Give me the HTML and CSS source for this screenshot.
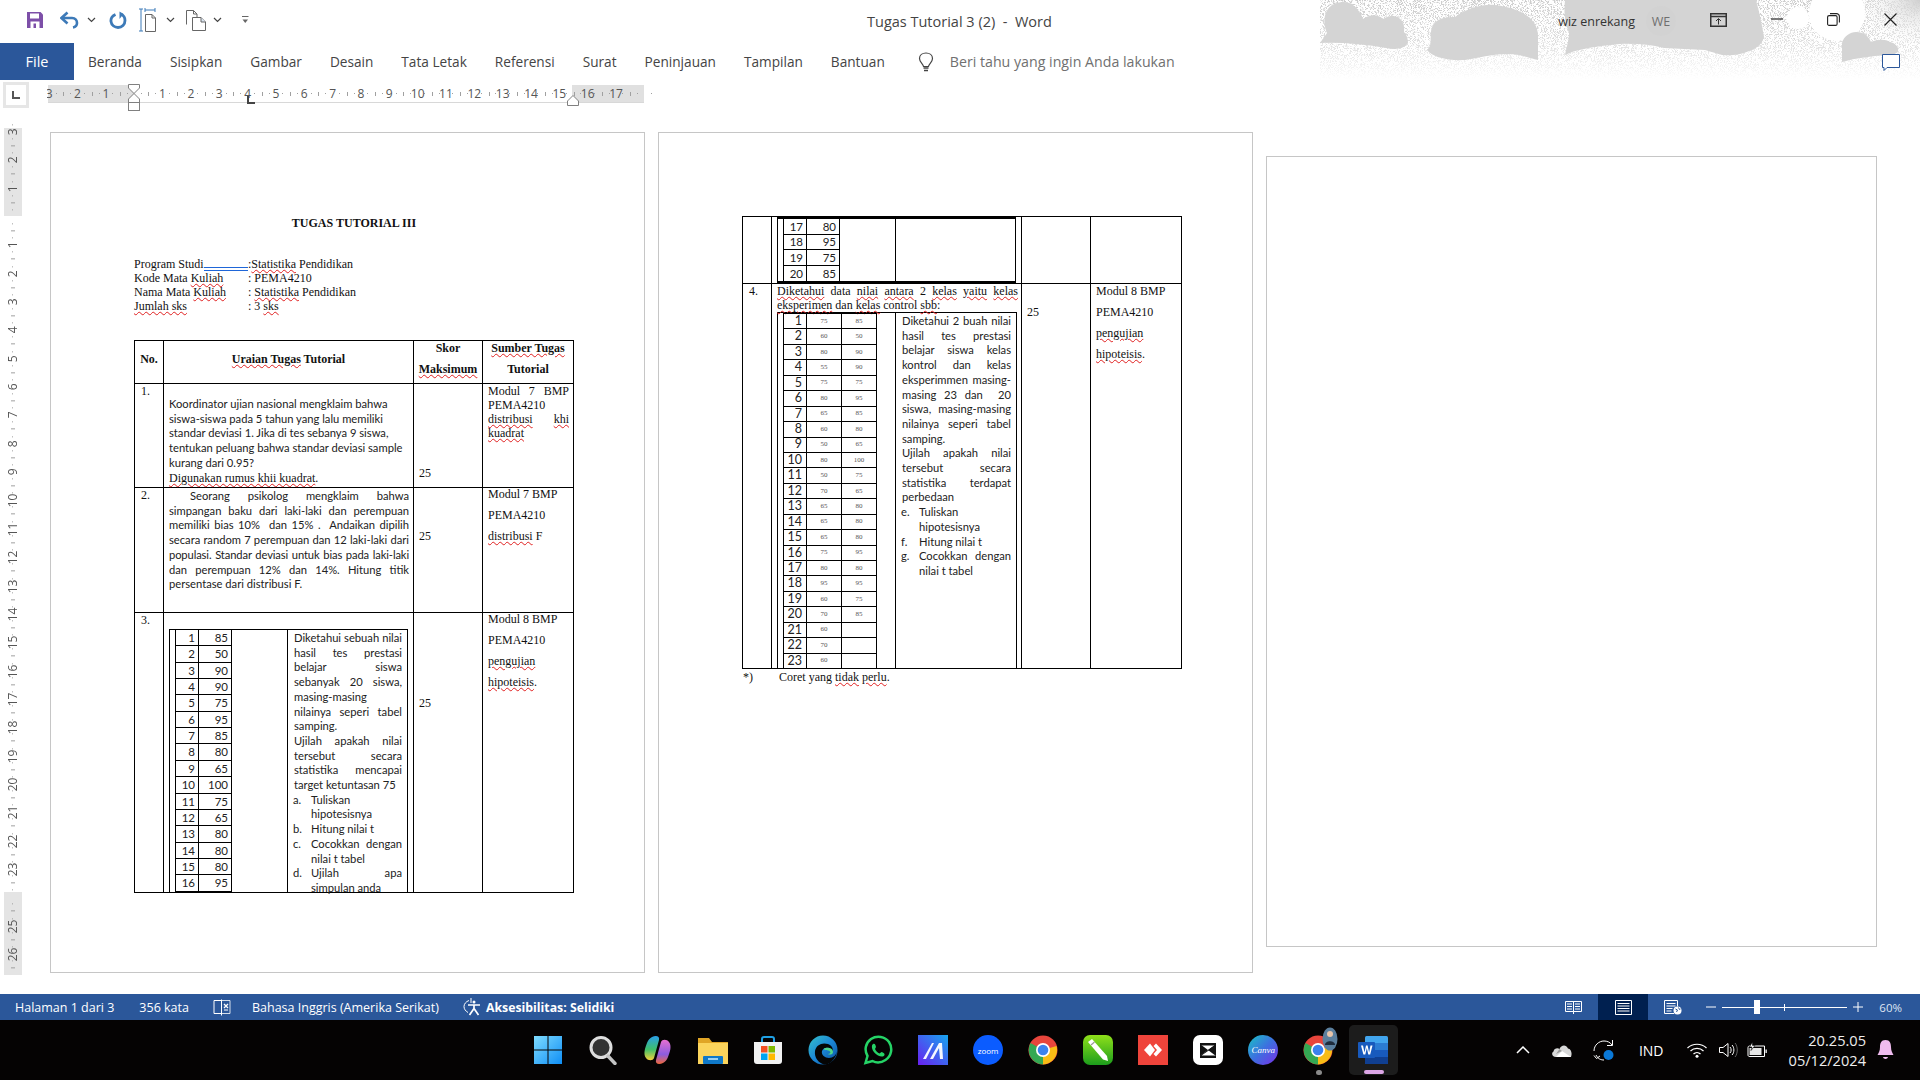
FILE: index.html
```html
<!DOCTYPE html>
<html lang="id">
<head>
    <meta charset="UTF-8">
    <title>Tugas Tutorial 3 (2) - Word</title>
    <link rel="stylesheet" href="styles.css">
</head>
<body>
<div class="app">
    <header class="head">
        <svg class="clouds" width="600" height="80" viewBox="0 0 600 80">
            <defs>
                <filter id="speck" x="0" y="0" width="100%" height="100%" color-interpolation-filters="sRGB">
                    <feTurbulence type="fractalNoise" baseFrequency="1.3" numOctaves="1" seed="4"/>
                    <feColorMatrix values="0 0 0 0 .8 0 0 0 0 .8 0 0 0 0 .8 10 0 0 0 -5"/>
                </filter>
                <linearGradient id="fadeV" x1="0" y1="0" x2="0" y2="1">
                    <stop offset="0" stop-color="#fff"/>
                    <stop offset=".5" stop-color="#aaa"/>
                    <stop offset="1" stop-color="#000"/>
                </linearGradient>
                <mask id="fade"><rect width="600" height="80" fill="url(#fadeV)"/></mask>
                <radialGradient id="corner" cx="1" cy="0" r="1">
                    <stop offset="0" stop-color="#cfcfcf"/>
                    <stop offset="1" stop-color="#fff" stop-opacity="0"/>
                </radialGradient>
            </defs>
            <rect width="600" height="80" filter="url(#speck)" mask="url(#fade)"/>
            <rect x="530" y="0" width="70" height="50" fill="url(#corner)"/>
            <circle cx="517" cy="13" r="28" fill="#fff"/>
            <circle cx="478" cy="18" r="11" fill="#fff"/>
            <g fill="#d4d4d4">
                <path d="M0 43 L7 33 C0 16 8 2 23 2 C33 2 39 9 43 19 C50 14 58 14 63 19 C74 12 86 18 84 32 C88 36 88 42 88 43 C84 49 76 50 66 48 C44 44 20 42 0 43Z"/>
                <path d="M107 50 C112 46 110 40 111 32 C112 20 122 17 135 17 C148 8 162 4 175 5 C200 8 218 18 218 36 L218 60 L199 55 C180 52 165 57 145 60 C128 61 112 57 107 50Z"/>
                <path d="M245 0 L436 0 C440 14 442 26 444 37 C442 44 437 48 432 50 C420 55 410 56 402 55 L385 50 L344 48 C325 43 305 43 291 45 C270 47 255 50 245 55 C247 45 249 40 249 33 C244 20 244 10 245 0Z"/>
                <path d="M522 62 L522 43 C524 36 530 32 536 32 C544 32 549 37 551 42 C558 39 566 39 570 42 C577 44 579 48 578 52 C574 55 570 55 566 55 C552 56 536 58 522 62Z"/>
            </g>
        </svg>
        <div class="titlebar">
            <div class="qat">
                <span class="q q-save">
                    <svg width="18" height="18" viewBox="0 0 18 18"><path d="M1 1h13.500L17 3.500V17H1z" fill="#7d4fa8"/><rect x="4" y="2.500" width="9" height="5" fill="#fff"/><rect x="4.500" y="10.500" width="9" height="6.500" fill="#fff"/><rect x="7.500" y="12.500" width="2.500" height="4.500" fill="#7d4fa8"/></svg>
                </span>
                <span class="q q-undo">
                    <svg width="20" height="18" viewBox="0 0 20 18"><path d="M3 7 H12 C15.500 7 17 9.500 17 12 C17 14.500 15.500 16 13 16.500" fill="none" stroke="#3d7ab8" stroke-width="2.600"/><path d="M7.500 1.500 L1.500 7 L7.500 12.500" fill="none" stroke="#3d7ab8" stroke-width="2.600"/></svg>
                </span>
                <span class="q q-c1"><svg width="9" height="6" viewBox="0 0 9 6"><path d="M1 1l3.500 3.500L8 1" fill="none" stroke="#444" stroke-width="1.200"/></svg></span>
                <span class="q q-redo">
                    <svg width="18" height="18" viewBox="0 0 18 18"><path d="M6.500 3.500 C3 5 1.700 8 2 10.500 C2.500 14.500 6 16.500 9 16.500 C13 16.500 16 13.500 16 9.500 C16 6.500 14 4 12 3" fill="none" stroke="#3d7ab8" stroke-width="2.800"/><path d="M10.500 0.500V8L14.500 3z" fill="#3d7ab8"/></svg>
                </span>
                <span class="q q-pw">
                    <svg width="20" height="24" viewBox="0 0 20 24"><path d="M2 1v22M0 1h4M0 23h4M6 2h10M6 0v4M16 0v4" fill="none" stroke="#3d7ab8"/><path d="M6.500 6.500H13L16.500 10V23.500H6.500z" fill="#fff" stroke="#666"/><path d="M13 6.500V10H16.500" fill="none" stroke="#666"/></svg>
                </span>
                <span class="q q-c2"><svg width="9" height="6" viewBox="0 0 9 6"><path d="M1 1l3.500 3.500L8 1" fill="none" stroke="#444" stroke-width="1.200"/></svg></span>
                <span class="q q-mp">
                    <svg width="22" height="22" viewBox="0 0 22 22"><path d="M1.500 15.500V1.500H8.500L12 5V8" fill="none" stroke="#666"/><path d="M8.500 1.500V5H12" fill="none" stroke="#666"/><path d="M7.500 8.500H16L20.500 13V21.500H7.500z" fill="#fff" stroke="#666"/><path d="M16 8.500V13H20.500" fill="#dbe6f2" stroke="#666"/></svg>
                </span>
                <span class="q q-c3"><svg width="9" height="6" viewBox="0 0 9 6"><path d="M1 1l3.500 3.500L8 1" fill="none" stroke="#444" stroke-width="1.200"/></svg></span>
                <span class="q q-more"><svg width="7" height="8" viewBox="0 0 7 8"><path d="M0 .5h6.500" stroke="#666"/><path d="M.5 3.500h5.500L3.250 7z" fill="#666"/></svg></span>
            </div>
            <div class="doc-title">Tugas Tutorial 3 (2)&nbsp; -&nbsp; Word</div>
            <div class="win">
                <span class="user">wiz enrekang</span>
                <span class="avatar">WE</span>
                <svg class="w-ribbon" width="17" height="14" viewBox="0 0 17 14"><rect x=".75" y=".75" width="15.500" height="12.500" fill="none" stroke="#333" stroke-width="1.500"/><path d="M1 3.500h15" stroke="#333" stroke-width="1.500"/><path d="M8.500 11.500V6M6 8l2.500-2.500L11 8" fill="none" stroke="#333"/></svg>
                <svg class="w-min" width="12" height="2" viewBox="0 0 12 2"><path d="M0 1h12" stroke="#222" stroke-width="1.200"/></svg>
                <svg class="w-max" width="13" height="13" viewBox="0 0 13 13"><rect x=".6" y="2.600" width="9.500" height="9.800" rx="1.500" fill="none" stroke="#222" stroke-width="1.100"/><path d="M3 .6h6.500c1.500 0 2.900 1.400 2.900 2.900v6" fill="none" stroke="#222" stroke-width="1.100"/></svg>
                <svg class="w-close" width="13" height="13" viewBox="0 0 13 13"><path d="M.5.500l12 12M12.500.500l-12 12" stroke="#222" stroke-width="1.200"/></svg>
            </div>
        </div>
        <nav class="tabs">
            <a class="file">File</a>
            <a class="tab">Beranda</a>
            <a class="tab">Sisipkan</a>
            <a class="tab">Gambar</a>
            <a class="tab">Desain</a>
            <a class="tab">Tata Letak</a>
            <a class="tab">Referensi</a>
            <a class="tab">Surat</a>
            <a class="tab">Peninjauan</a>
            <a class="tab">Tampilan</a>
            <a class="tab">Bantuan</a>
            <svg class="bulb" width="16" height="20" viewBox="0 0 16 20"><path d="M5.500 14.500 C5 11.500 1.500 10 1.500 6.500 C1.500 3 4.500 1 8 1 C11.500 1 14.500 3 14.500 6.500 C14.500 10 11 11.500 10.500 14.500z" fill="none" stroke="#444" stroke-width="1.200"/><path d="M5.500 16h5M6 18.500h4" stroke="#444" stroke-width="1.300"/></svg>
            <span class="tell">Beri tahu yang ingin Anda lakukan</span>
            <svg class="comment" width="18" height="17" viewBox="0 0 18 17"><path d="M.5.500h17v13H5l-3 3v-3H.5z" fill="#fff" stroke="#2b579a"/></svg>
        </nav>
    </header>

    <div class="ruler-row">
        <div class="tab-sel"><svg viewBox="0 0 8 8"><path d="M1 0v7h7" fill="none" stroke="#555" stroke-width="2"/></svg></div>
        <div class="hruler">
            <div class="hr-nums">
                <span>3</span><span>2</span><span>1</span><span></span><span>1</span><span>2</span><span>3</span><span>4</span><span>5</span><span>6</span><span>7</span><span>8</span><span>9</span><span>10</span><span>11</span><span>12</span><span>13</span><span>14</span><span>15</span><span>16</span><span>17</span><span></span>
            </div>
            <svg class="mark m-left" width="14" height="28" viewBox="0 0 14 28"><path d="M1.500 .5h11V4L7 9.500 1.500 4z M7 9.500L12.500 15v3.500h-11V15z" fill="#fff" stroke="#808080"/><rect x="1.500" y="18.500" width="11" height="8" fill="#fff" stroke="#808080"/></svg>
            <svg class="mark m-tab" width="8" height="8" viewBox="0 0 8 8"><path d="M1 0v7h7" fill="none" stroke="#444" stroke-width="2"/></svg>
            <svg class="mark m-right" width="12" height="11" viewBox="0 0 12 11"><path d="M6 .5L11.500 6v4.500H.5V6z" fill="#fff" stroke="#808080"/></svg>
        </div>
    </div>

    <main class="workspace">
        <div class="vruler">
            <span>3</span><span>2</span><span>1</span>
            <span class="on"></span>
            <span class="on">1</span><span class="on">2</span><span class="on">3</span><span class="on">4</span><span class="on">5</span><span class="on">6</span><span class="on">7</span><span class="on">8</span><span class="on">9</span><span class="on">10</span><span class="on">11</span><span class="on">12</span><span class="on">13</span><span class="on">14</span><span class="on">15</span><span class="on">16</span><span class="on">17</span><span class="on">18</span><span class="on">19</span><span class="on">20</span><span class="on">21</span><span class="on">22</span><span class="on">23</span>
            <span></span><span>25</span><span>26</span>
        </div>
        <div class="pages">
            <section class="page">
                <div class="doc-head">TUGAS TUTORIAL III</div>
                <div class="info">
                    <div class="info-row"><span class="k">Program Studi<i class="gram"></i></span><span class="v">:<u>Statistika</u> Pendidikan</span></div>
                    <div class="info-row"><span class="k">Kode Mata <u>Kuliah</u></span><span class="v">: PEMA4210</span></div>
                    <div class="info-row"><span class="k">Nama Mata <u>Kuliah</u></span><span class="v">: <u>Statistika</u> Pendidikan</span></div>
                    <div class="info-row"><span class="k"><u>Jumlah sks</u></span><span class="v">: 3 <u>sks</u></span></div>
                </div>

                <table class="tutor">
                    <colgroup><col class="c-no"><col class="c-ur"><col class="c-sk"><col class="c-su"></colgroup>
                    <tr class="r-head">
                        <th>No.</th>
                        <th><u>Uraian Tugas</u> Tutorial</th>
                        <th class="loose"><div>Skor</div><div><u>Maksimum</u></div></th>
                        <th class="loose"><div><u>Sumber Tugas</u></div><div>Tutorial</div></th>
                    </tr>
                    <tr class="r-1">
                        <td class="no">1.</td>
                        <td class="ur pad-13">
                            <div class="cal">Koordinator ujian nasional mengklaim bahwa</div>
                            <div class="cal">siswa-siswa pada 5 tahun yang lalu memiliki</div>
                            <div class="cal">standar deviasi 1. Jika di tes sebanya 9 siswa,</div>
                            <div class="cal">tentukan peluang bahwa standar deviasi sample</div>
                            <div class="cal">kurang dari 0.95?</div>
                            <div class="ser"><u>Digunakan rumus khii kuadrat</u>.</div>
                        </td>
                        <td class="sk bottom">25</td>
                        <td class="su">
                            <div class="j">Modul 7 BMP</div>
                            <div>PEMA4210</div>
                            <div class="j"><u>distribusi</u> <u>khi</u></div>
                            <div><u>kuadrat</u></div>
                        </td>
                    </tr>
                    <tr class="r-2">
                        <td class="no">2.</td>
                        <td class="ur pad-2">
                            <div class="cal j first">Seorang psikolog mengklaim bahwa</div>
                            <div class="cal j">simpangan baku dari laki-laki dan perempuan</div>
                            <div class="cal j">memiliki bias 10%&nbsp; dan 15% .&nbsp; Andaikan dipilih</div>
                            <div class="cal j">secara random 7 perempuan dan 12 laki-laki dari</div>
                            <div class="cal j tight">populasi. Standar deviasi untuk bias pada laki-laki</div>
                            <div class="cal j">dan perempuan 12% dan 14%. Hitung titik</div>
                            <div class="cal">persentase dari distribusi F.</div>
                        </td>
                        <td class="sk pt-41">25</td>
                        <td class="su loose up">
                            <div>Modul 7 BMP</div>
                            <div>PEMA4210</div>
                            <div><u>distribusi</u> F</div>
                        </td>
                    </tr>
                    <tr class="r-3">
                        <td class="no">3.</td>
                        <td class="ur nest">
                            <div class="split s-q3">
                                <div class="stub"></div>
                                <div class="left">
                                    <table class="nums n-q3">
                                        <tr><td>1</td><td>85</td></tr>
                                        <tr><td>2</td><td>50</td></tr>
                                        <tr><td>3</td><td>90</td></tr>
                                        <tr><td>4</td><td>90</td></tr>
                                        <tr><td>5</td><td>75</td></tr>
                                        <tr><td>6</td><td>95</td></tr>
                                        <tr><td>7</td><td>85</td></tr>
                                        <tr><td>8</td><td>80</td></tr>
                                        <tr><td>9</td><td>65</td></tr>
                                        <tr><td>10</td><td>100</td></tr>
                                        <tr><td>11</td><td>75</td></tr>
                                        <tr><td>12</td><td>65</td></tr>
                                        <tr><td>13</td><td>80</td></tr>
                                        <tr><td>14</td><td>80</td></tr>
                                        <tr><td>15</td><td>80</td></tr>
                                        <tr><td>16</td><td>95</td></tr>
                                    </table>
                                </div>
                                <div class="desc">
                                    <div class="cal j">Diketahui sebuah nilai</div>
                                    <div class="cal j">hasil tes prestasi</div>
                                    <div class="cal j">belajar siswa</div>
                                    <div class="cal j">sebanyak 20 siswa,</div>
                                    <div class="cal">masing-masing</div>
                                    <div class="cal j">nilainya seperi tabel</div>
                                    <div class="cal">samping.</div>
                                    <div class="cal j">Ujilah apakah nilai</div>
                                    <div class="cal j">tersebut secara</div>
                                    <div class="cal j">statistika mencapai</div>
                                    <div class="cal">target ketuntasan 75</div>
                                    <div class="cal li"><span class="m">a.</span><span>Tuliskan</span></div>
                                    <div class="cal in">hipotesisnya</div>
                                    <div class="cal li"><span class="m">b.</span><span>Hitung nilai t</span></div>
                                    <div class="cal li"><span class="m">c.</span><span class="j grow">Cocokkan dengan</span></div>
                                    <div class="cal in">nilai t tabel</div>
                                    <div class="cal li"><span class="m">d.</span><span class="j grow">Ujilah apa</span></div>
                                    <div class="cal in">simpulan anda</div>
                                </div>
                            </div>
                        </td>
                        <td class="sk pt-83">25</td>
                        <td class="su loose up">
                            <div>Modul 8 BMP</div>
                            <div>PEMA4210</div>
                            <div><u>pengujian</u></div>
                            <div><u>hipoteisis</u>.</div>
                        </td>
                    </tr>
                </table>
            </section>

            <section class="page">
                <table class="tutor">
                    <colgroup><col class="c-no"><col class="c-ur"><col class="c-sk"><col class="c-su"></colgroup>
                    <tr class="r-cont">
                        <td></td>
                        <td class="ur nest-top">
                            <div class="split s-cont">
                                <div class="stub"></div>
                                <div class="left">
                                    <table class="nums n-cont">
                                        <tr><td>17</td><td>80</td></tr>
                                        <tr><td>18</td><td>95</td></tr>
                                        <tr><td>19</td><td>75</td></tr>
                                        <tr><td>20</td><td>85</td></tr>
                                    </table>
                                </div>
                                <div class="desc"></div>
                            </div>
                        </td>
                        <td></td>
                        <td></td>
                    </tr>
                    <tr class="r-4">
                        <td class="no">4.</td>
                        <td class="ur nest-4">
                            <div class="ser j wide"><u>Diketahui</u> data <u>nilai</u> <u>antara</u> 2 <u>kelas</u> <u>yaitu</u> <u>kelas</u></div>
                            <div class="ser"><u>eksperimen</u> dan <u>kelas</u> control <u>sbb</u>:</div>
                            <div class="split s-q4">
                                <div class="stub"></div>
                                <div class="left">
                                    <table class="nums n-q4">
                                        <tr><td>1</td><td>75</td><td>85</td></tr>
                                        <tr><td>2</td><td>60</td><td>50</td></tr>
                                        <tr><td>3</td><td>80</td><td>90</td></tr>
                                        <tr><td>4</td><td>55</td><td>90</td></tr>
                                        <tr><td>5</td><td>75</td><td>75</td></tr>
                                        <tr><td>6</td><td>80</td><td>95</td></tr>
                                        <tr><td>7</td><td>65</td><td>85</td></tr>
                                        <tr><td>8</td><td>60</td><td>80</td></tr>
                                        <tr><td>9</td><td>50</td><td>65</td></tr>
                                        <tr><td>10</td><td>80</td><td>100</td></tr>
                                        <tr><td>11</td><td>50</td><td>75</td></tr>
                                        <tr><td>12</td><td>70</td><td>65</td></tr>
                                        <tr><td>13</td><td>65</td><td>80</td></tr>
                                        <tr><td>14</td><td>65</td><td>80</td></tr>
                                        <tr><td>15</td><td>65</td><td>80</td></tr>
                                        <tr><td>16</td><td>75</td><td>95</td></tr>
                                        <tr><td>17</td><td>80</td><td>80</td></tr>
                                        <tr><td>18</td><td>95</td><td>95</td></tr>
                                        <tr><td>19</td><td>60</td><td>75</td></tr>
                                        <tr><td>20</td><td>70</td><td>85</td></tr>
                                        <tr><td>21</td><td>60</td><td></td></tr>
                                        <tr><td>22</td><td>70</td><td></td></tr>
                                        <tr><td>23</td><td>60</td><td></td></tr>
                                    </table>
                                </div>
                                <div class="desc">
                                    <div class="cal j">Diketahui 2 buah nilai</div>
                                    <div class="cal j">hasil tes prestasi</div>
                                    <div class="cal j">belajar siswa kelas</div>
                                    <div class="cal j">kontrol dan kelas</div>
                                    <div class="cal j">eksperimmen masing-</div>
                                    <div class="cal j">masing 23 dan&nbsp; 20</div>
                                    <div class="cal j">siswa, masing-masing</div>
                                    <div class="cal j">nilainya seperi tabel</div>
                                    <div class="cal">samping.</div>
                                    <div class="cal j">Ujilah apakah nilai</div>
                                    <div class="cal j">tersebut secara</div>
                                    <div class="cal j">statistika terdapat</div>
                                    <div class="cal">perbedaan</div>
                                    <div class="cal li"><span class="m">e.</span><span>Tuliskan</span></div>
                                    <div class="cal in">hipotesisnya</div>
                                    <div class="cal li"><span class="m">f.</span><span>Hitung nilai t</span></div>
                                    <div class="cal li"><span class="m">g.</span><span class="j grow">Cocokkan dengan</span></div>
                                    <div class="cal in">nilai t tabel</div>
                                </div>
                            </div>
                        </td>
                        <td class="sk pt-21">25</td>
                        <td class="su loose">
                            <div>Modul 8 BMP</div>
                            <div>PEMA4210</div>
                            <div><u>pengujian</u></div>
                            <div><u>hipoteisis</u>.</div>
                        </td>
                    </tr>
                </table>
                <div class="foot"><span class="star">*)</span><span>Coret yang <u>tidak</u> <u>perlu</u>.</span></div>
            </section>

            <section class="page letter"></section>
        </div>
    </main>

    <footer class="status">
        <span class="st st-page">Halaman 1 dari 3</span>
        <span class="st st-words">356 kata</span>
        <svg class="st-book" width="18" height="17" viewBox="0 0 18 17"><path d="M8.500 1.500H1v13h7.500M8.500 .5v16" fill="none" stroke="#fff"/><path d="M8.500 1.500H17v13H8.500" fill="none" stroke="#fff" stroke-width=".8"/><path d="M11 5l4 4M15 5l-4 4" stroke="#fff" stroke-width="1.300"/><path d="M11 11h4" stroke="#fff"/></svg>
        <span class="st st-lang">Bahasa Inggris (Amerika Serikat)</span>
        <svg class="st-acc" width="20" height="18" viewBox="0 0 20 18"><path d="M6 2.500 C3 3.500 1 6 1 8.500 C1 11 2.500 13 5 14.500" fill="none" stroke="#fff"/><path d="M8 0v5" stroke="#fff"/><circle cx="11" cy="4" r="1.500" fill="#fff"/><path d="M5 7h12M11 7v3.500M6.500 17l4.500-6.500L15.500 17" fill="none" stroke="#fff" stroke-width="1.700"/></svg>
        <b class="st st-acc-t">Aksesibilitas: Selidiki</b>
        <div class="views">
            <span class="view">
                <svg width="17" height="14" viewBox="0 0 17 14"><path d="M8.500 1.500H.5v10h8zM8.500 1.500h8v10h-8zM2 4h5M2 6.500h5M2 9h5M10 4h5M10 6.500h5M10 9h5" fill="none" stroke="#fff"/><path d="M8.500 12v2" stroke="#fff"/></svg>
            </span>
            <span class="view active">
                <svg width="17" height="15" viewBox="0 0 17 15"><path d="M.5.500h16v14H.5zM2.500 3.500h12M2.500 6h12M2.500 8.500h12M2.500 11h12" fill="none" stroke="#fff"/></svg>
            </span>
            <span class="view">
                <svg width="18" height="15" viewBox="0 0 18 15"><path d="M10 13.500H.5V.5h13v6M2.500 3.500h9M2.500 6h9M2.500 8.500h6M2.500 11h5" fill="none" stroke="#fff"/><circle cx="13.500" cy="10.500" r="4" fill="#fff"/><path d="M11.500 9l2 1-1 2M14.500 7.500l1 2 1-.5" fill="none" stroke="#2b579a"/></svg>
            </span>
        </div>
        <div class="zoom">
            <svg width="10" height="2" viewBox="0 0 10 2"><path d="M0 1h10" stroke="#fff"/></svg>
            <div class="slider"><i class="thumb"></i><i class="mid"></i></div>
            <svg width="10" height="10" viewBox="0 0 10 10"><path d="M0 5h10M5 0v10" stroke="#fff"/></svg>
        </div>
        <span class="st st-zoom">60%</span>
    </footer>

    <div class="taskbar">
        <div class="apps">
            <span class="app-i">
                <svg width="30" height="30" viewBox="0 0 30 30"><defs><linearGradient id="winA" x1="0" y1="0" x2="1" y2="1"><stop offset="0" stop-color="#7fdcff"/><stop offset="1" stop-color="#0f8ef5"/></linearGradient></defs><path d="M1 1h13.500v13.500H1zM15.500 1H29v13.500H15.500zM1 15.500h13.500V29H1zM15.500 15.500H29V29H15.500z" fill="url(#winA)"/></svg>
            </span>
            <span class="app-i">
                <svg width="30" height="30" viewBox="0 0 30 30"><circle cx="13" cy="12.500" r="10" fill="#333" stroke="#dedede" stroke-width="3"/><path d="M20 21l7 7.500" stroke="#c4c4c4" stroke-width="3.400" stroke-linecap="round"/></svg>
            </span>
            <span class="app-i">
                <svg width="30" height="30" viewBox="0 0 30 30"><defs><linearGradient id="copA" x1="0" y1="0" x2="0" y2="1"><stop offset="0" stop-color="#2a9fe8"/><stop offset=".55" stop-color="#3fbf6a"/><stop offset="1" stop-color="#f6d13a"/></linearGradient><linearGradient id="copB" x1="0" y1="0" x2="0" y2="1"><stop offset="0" stop-color="#e86fd0"/><stop offset=".6" stop-color="#8c5ce0"/><stop offset="1" stop-color="#f0683a"/></linearGradient></defs><path d="M9 2 C13 0 17 1 16 5 L11 23 C10 26 5 26 3 23 C0 19 2 13 4 8 C5 5 7 3 9 2Z" fill="url(#copA)"/><path d="M20 28 C16 30 12 29 13 25 L18 7 C19 4 24 4 26 7 C29 11 27 17 25 22 C24 25 22 27 20 28Z" fill="url(#copB)"/></svg>
            </span>
            <span class="app-i">
                <svg width="30" height="30" viewBox="0 0 30 30"><path d="M0 3h11l3 4H30v22H0z" fill="#e0a526"/><path d="M0 8h30v21H0z" fill="#fbd45c"/><rect x="5" y="21" width="20" height="8" rx="1" fill="#0f78c8"/><rect x="10" y="23" width="10" height="2" fill="#9bd0f2"/></svg>
            </span>
            <span class="app-i">
                <svg width="30" height="30" viewBox="0 0 30 30"><path d="M9 8V4a2 2 0 012-2h8a2 2 0 012 2v4" fill="none" stroke="#1fa0e4" stroke-width="2"/><path d="M1 7h28v19a3 3 0 01-3 3H4a3 3 0 01-3-3z" fill="#f2f2f2"/><rect x="8" y="11" width="6.500" height="6.500" fill="#f25022"/><rect x="15.500" y="11" width="6.500" height="6.500" fill="#7fba00"/><rect x="8" y="18.500" width="6.500" height="6.500" fill="#00a4ef"/><rect x="15.500" y="18.500" width="6.500" height="6.500" fill="#ffb900"/></svg>
            </span>
            <span class="app-i">
                <svg width="30" height="30" viewBox="0 0 30 30"><defs><linearGradient id="edgeA" x1="0" y1="0" x2="1" y2="1"><stop offset="0" stop-color="#35c1c9"/><stop offset=".5" stop-color="#1b86d6"/><stop offset="1" stop-color="#0a4f9c"/></linearGradient></defs><circle cx="15" cy="15" r="14.500" fill="url(#edgeA)"/><path d="M29 15 C29 20 25 23 21 23 C17 23 13 20 14 16 C15 13 18 12 21 13 C24 14 24 17 22 18 C26 18 26 11 20 9 C14 7 8 10 7 16 C6 23 11 28 16 29.500 C23 30 29 22 29 15Z" fill="#050505"/><path d="M16 13.500 C18 12 25 12 25 17 C25 20 21 20 20 19 C23 19 23 16 20 15.500 C18 15 16.500 16 16 13.500Z" fill="#4fd68a"/></svg>
            </span>
            <span class="app-i">
                <svg width="30" height="30" viewBox="0 0 30 30"><path d="M2.500 28 L4.500 21 C1 15 2.500 8 8 4 C14 0 22 1.500 26 7 C30 13 28.500 21 22.500 25 C18 28 13 28 9.500 26z" fill="none" stroke="#25d366" stroke-width="2.500"/><path d="M10 9 C12 8 12.500 10 13 12 L12 14 C13 16 14.500 17.500 16.500 18.500 L18.500 17 C20.500 17.500 22 18.500 21.500 20 C20.500 22 18 22 15 20.500 C12 19 9.500 16 9 13 C8.700 11 9 9.700 10 9Z" fill="#25d366"/></svg>
            </span>
            <span class="app-i">
                <svg width="30" height="30" viewBox="0 0 30 30"><defs><linearGradient id="mA" x1="1" y1="0" x2="0" y2="1"><stop offset="0" stop-color="#16a6ef"/><stop offset="1" stop-color="#6a1ff0"/></linearGradient></defs><rect width="30" height="30" fill="url(#mA)"/><path d="M5 24L14 8h2L8 24zM12 24L21 8h3l1 16h-3l-1-11-6 11z" fill="#fff" opacity=".95"/></svg>
            </span>
            <span class="app-i zoomapp">zoom</span>
            <span class="app-i">
                <svg width="30" height="30" viewBox="0 0 30 30"><circle cx="15" cy="15" r="14.500" fill="#e8453c"/><path d="M15 15L28.500 11A14.500 14.500 0 0115 29.500z" fill="#f9bc15"/><path d="M15 15L15 29.500A14.500 14.500 0 012.500 8z" fill="#34a853"/><circle cx="15" cy="15" r="7" fill="#fff"/><circle cx="15" cy="15" r="5.300" fill="#3b82ef"/></svg>
            </span>
            <span class="app-i">
                <svg width="30" height="30" viewBox="0 0 30 30"><defs><linearGradient id="penA" x1="0" y1="0" x2="0" y2="1"><stop offset="0" stop-color="#8fe01a"/><stop offset="1" stop-color="#1c9d1c"/></linearGradient></defs><rect width="30" height="30" rx="7" fill="url(#penA)"/><path d="M5 7l4-3 15 17 1 5-5-1.500z" fill="#fff"/><path d="M8 10l3.500-3" stroke="#9a9a9a" stroke-width="1.200"/></svg>
            </span>
            <span class="app-i">
                <svg width="30" height="30" viewBox="0 0 30 30"><rect width="30" height="30" fill="#ef443b"/><path d="M12 8.500L6 15l6 6.500L17 15z" fill="#fff"/><path d="M18 8.500L24 15l-6 6.500-2.500-2.500L19 15l-3.500-4z" fill="#fff"/></svg>
            </span>
            <span class="app-i">
                <svg width="30" height="30" viewBox="0 0 30 30"><rect width="30" height="30" rx="7" fill="#fff"/><path d="M7 8h16v2.500L8.500 20.500H23V23H7v-2.500L21.500 10.500H7z" fill="#111"/><path d="M7 9l8 6-8 6zM23 9l-8 6 8 6z" fill="#111"/></svg>
            </span>
            <span class="app-i canva">Canva</span>
            <span class="app-i rel">
                <svg width="30" height="30" viewBox="0 0 30 30"><circle cx="15" cy="15" r="14.500" fill="#e8453c"/><path d="M15 15L28.500 11A14.500 14.500 0 0115 29.500z" fill="#f9bc15"/><path d="M15 15L15 29.500A14.500 14.500 0 012.500 8z" fill="#34a853"/><circle cx="15" cy="15" r="7" fill="#fff"/><circle cx="15" cy="15" r="5.300" fill="#3b82ef"/></svg>
                <svg class="badge" width="16" height="24" viewBox="0 0 16 24"><ellipse cx="8" cy="12" rx="7.500" ry="11.500" fill="#5b7f9e"/><circle cx="8" cy="7" r="3" fill="#e8c5ab"/><path d="M3 18c0-5 10-5 10 0z" fill="#1f2c3d"/></svg>
                <i class="dot"></i>
            </span>
            <span class="app-i word-i">
                <svg width="30" height="30" viewBox="0 0 30 30"><rect x="7" y="1" width="23" height="28" rx="1.500" fill="#41a5ee"/><rect x="7" y="8" width="23" height="7" fill="#2b7cd3"/><rect x="7" y="15" width="23" height="7" fill="#185abd"/><rect x="7" y="22" width="23" height="7" fill="#103f91"/><rect x="0" y="7" width="17" height="16" rx="1" fill="#185abd"/><path d="M3 10.500h2l1.500 7 1.500-7h1.600l1.500 7 1.400-7H14.500l-2.300 9h-1.900L8.800 13l-1.500 6.500H5.400z" fill="#fff"/></svg>
                <i class="run"></i>
            </span>
        </div>
        <div class="tray">
            <svg class="t-chev" width="14" height="8" viewBox="0 0 14 8"><path d="M1 7l6-6 6 6" fill="none" stroke="#fff" stroke-width="1.500"/></svg>
            <svg class="t-cloud" width="21" height="13" viewBox="0 0 21 13"><path d="M5 13 C1 13 0 9 2.500 7.500 C3 4 7 3.500 8.500 5 C10 1 15 0 17 4.500 C20 5 21.500 9 20 13z" fill="#d8d8d8"/><path d="M5 13 L11 7 L20 13z" fill="#fff"/><path d="M8.500 5 C9.500 6 11 7 11 7 L5 10z" fill="#9a9a9a"/></svg>
            <svg class="t-sync" width="22" height="21" viewBox="0 0 22 21"><path d="M1 11 C1 5 6 1 11 1 C14 1 17 2 19 5M14 5.500h5.500V0" fill="none" stroke="#fff"/><path d="M1 15.500l2.500 3L7 16M3 15 C5 19 8 20 11 20" fill="none" stroke="#fff"/><circle cx="15.500" cy="15" r="5" fill="#0a78d7"/></svg>
            <span class="t-lang">IND</span>
            <svg class="t-wifi" width="20" height="15" viewBox="0 0 20 15"><path d="M.5 5C5.500 0 14.500 0 19.500 5M3.500 8C7 4.500 13 4.500 16.500 8M6.500 11C8.500 9 11.500 9 13.500 11" fill="none" stroke="#fff" stroke-width="1.200"/><circle cx="10" cy="13.300" r="1.500" fill="#fff"/></svg>
            <svg class="t-vol" width="20" height="16" viewBox="0 0 20 16"><path d="M.5 5.500H4L9 1.500v13l-5-4H.5z" fill="none" stroke="#fff"/><path d="M11 5c1.500 1.500 1.500 4.500 0 6M13 3c2.500 2.500 2.500 7.500 0 10" fill="none" stroke="#fff"/><path d="M16 1c3 3.500 3 10.500 0 14" fill="none" stroke="#666"/></svg>
            <svg class="t-batt" width="20" height="17" viewBox="0 0 20 17"><path d="M3 4H17.500V14.500H3C1.500 14.500 1 14 1 13V5.500C1 4.500 1.500 4 3 4Z" fill="none" stroke="#fff"/><rect x="2.500" y="6" width="12" height="7" fill="#fff" opacity=".9"/><path d="M18.500 7.500h1.300v3.500h-1.300z" fill="#fff"/><path d="M5.500 0L2.500 5h2.500L4 8.500 8 3.500H5.500z" fill="#fff" stroke="#000" stroke-width=".6"/></svg>
            <div class="t-clock"><div>20.25.05</div><div>05/12/2024</div></div>
            <svg class="t-bell" width="17" height="20" viewBox="0 0 17 20"><path d="M8.500 0 C4 0 3 3.500 3 7 C3 11 1.500 13 0.500 15 H16.500 C15.500 13 14 11 14 7 C14 3.500 13 0 8.500 0Z" fill="#efbbee"/><path d="M6 17h5c-.5 2.500-4.500 2.500-5 0z" fill="#efbbee"/></svg>
        </div>
    </div>
</div>
</body>
</html>
```

FILE: styles.css
```css
* {
    box-sizing: border-box;
}

html, body {
    margin: 0;
    padding: 0;
}

body {
    width: 1920px;
    height: 1080px;
    overflow: hidden;
    background: #fff;
    font-family: "Open Sans", sans-serif;
    color: #444;
}

.app {
    display: flex;
    flex-direction: column;
    height: 1080px;
}

/* title bar + ribbon tabs */
.head {
    position: relative;
    height: 80px;
    flex: none;
}

.clouds {
    position: absolute;
    top: 0;
    right: 0;
}

.titlebar {
    position: relative;
    display: flex;
    height: 43px;
}

.qat {
    position: relative;
    width: 300px;
}

.q {
    position: absolute;
    display: flex;
    align-items: center;
    justify-content: center;
    width: 24px;
    height: 24px;
    top: 8px;
}

.q-save { left: 23px; }
.q-undo { left: 58px; }
.q-c1 { left: 79px; }
.q-redo { left: 106px; }
.q-pw { left: 137px; }
.q-c2 { left: 158px; }
.q-mp { left: 184px; }
.q-c3 { left: 205px; }
.q-more { left: 233px; }

.doc-title {
    position: absolute;
    left: 867px;
    top: 11px;
    font-size: 14.5px;
    line-height: 22px;
    color: #444;
    white-space: pre;
}

.win {
    margin-left: auto;
    display: flex;
    align-items: center;
    height: 42px;
    color: #333;
}

.user {
    font-size: 12.5px;
    margin-right: 11px;
}

.avatar {
    display: flex;
    align-items: center;
    justify-content: center;
    width: 30px;
    height: 30px;
    border-radius: 50%;
    background: #d2d2d2;
    color: #6f6f6f;
    font-size: 12.5px;
    margin-right: 34px;
}

.w-ribbon { margin-right: 44px; margin-top: -3px; }
.w-min { margin-right: 44px; margin-top: -5px; }
.w-max { margin-right: 44px; margin-top: -3px; }
.w-close { margin-right: 23px; margin-top: -3px; }

.tabs {
    position: relative;
    display: flex;
    align-items: center;
    height: 37px;
    font-size: 13.65px;
    color: #444;
}

.file {
    display: flex;
    align-items: center;
    justify-content: center;
    width: 74px;
    height: 37px;
    background: #2b579a;
    color: #fff;
    font-size: 14.5px;
}

.tab {
    padding: 0 14px;
    white-space: nowrap;
}

.bulb {
    margin-left: 19px;
    margin-right: 16px;
}

.tell {
    color: #707070;
    font-size: 14.2px;
}

.comment {
    position: absolute;
    right: 20px;
    top: 11px;
}

/* horizontal ruler */
.ruler-row {
    position: relative;
    flex: none;
    height: 30px;
    overflow: visible;
}

.tab-sel {
    position: absolute;
    left: 3px;
    top: 2px;
    width: 26px;
    height: 26px;
    background: #e6e6e6;
    display: flex;
    align-items: center;
    justify-content: center;
}

.tab-sel svg {
    background: #fff;
    width: 20px;
    height: 20px;
    padding: 6px;
}

.hruler {
    position: absolute;
    left: 48px;
    top: 5px;
    width: 596px;
    height: 18px;
    background: linear-gradient(#fff, #fff) 86px 0 / 438px 100% no-repeat, #e0e0e0;
    border-bottom: 1px solid #d8d8d8;
}

.hr-nums {
    display: flex;
    margin-left: -13px;
    height: 17px;
    width: 640px;
    overflow: hidden;
    clip-path: inset(0 0 0 12px);
}

.hr-nums span {
    flex: 0 0 28.35px;
    text-align: center;
    font-size: 12px;
    line-height: 18px;
    color: #555;
    background:
        linear-gradient(#a0a0a0, #a0a0a0) 0 50% / 1px 4px no-repeat,
        linear-gradient(#a0a0a0, #a0a0a0) 25% 50% / 1px 1px no-repeat,
        linear-gradient(#a0a0a0, #a0a0a0) 75% 50% / 1px 1px no-repeat;
}

.mark {
    position: absolute;
}

.m-left { left: 79px; top: -1px; }
.m-tab { left: 199px; top: 11px; }
.m-right { left: 519px; top: 10px; }

/* work area */
.workspace {
    flex: 1;
    display: flex;
    align-items: flex-start;
    min-height: 0;
    overflow: hidden;
}

.vruler {
    width: 18px;
    margin: 18px 28px 0 4px;
    height: 847px;
    background: linear-gradient(#fff, #fff) 0 88px / 100% 676px no-repeat, #e4e4e4;
    display: flex;
    flex-direction: column;
    align-items: stretch;
    padding-top: 0;
}

.vruler span {
    flex: 0 0 28.35px;
    display: flex;
    align-items: center;
    justify-content: center;
    writing-mode: vertical-rl;
    transform: rotate(180deg);
    font-size: 12px;
    line-height: 18px;
    color: #555;
    background:
        linear-gradient(#a0a0a0, #a0a0a0) 50% 0 / 4px 1px no-repeat,
        linear-gradient(#a0a0a0, #a0a0a0) 50% 25% / 1px 1px no-repeat,
        linear-gradient(#a0a0a0, #a0a0a0) 50% 75% / 1px 1px no-repeat;
}

.vruler span:first-child {
    margin-top: -10px;
}

.pages {
    display: flex;
    align-items: flex-start;
    gap: 13px;
    padding-top: 22px;
}

.page {
    width: 595px;
    height: 841px;
    padding: 83px 0 0 83px;
    border: 1px solid #c6c6c6;
    background: #fff;
    font-family: "Liberation Serif", serif;
    font-size: 12px;
    line-height: 14px;
    color: #111;
}

.page.letter {
    width: 611px;
    height: 791px;
    margin-top: 24px;
}

.page u {
    text-decoration: underline wavy #e02020 1px;
    text-underline-offset: 1px;
}

.doc-head {
    width: 440px;
    text-align: center;
    font-weight: bold;
}

.info {
    margin-top: 27px;
}

.info-row {
    display: flex;
    height: 14px;
}

.k {
    width: 114px;
    white-space: nowrap;
}

.gram {
    display: inline-block;
    width: 44px;
    height: 4px;
    border-top: 1px solid #1f66d8;
    border-bottom: 1px solid #1f66d8;
    vertical-align: -3px;
}

.tutor {
    margin-top: 27px;
    width: 439px;
    table-layout: fixed;
    border-collapse: collapse;
}

.page > .tutor:first-child {
    margin-top: 0;
}

.c-no { width: 29px; }
.c-ur { width: 250px; }
.c-sk { width: 69px; }
.c-su { width: 91px; }

.tutor > tbody > tr > td,
.tutor > tbody > tr > th {
    border: 1px solid #000;
    padding: 0;
    vertical-align: top;
}

.r-head { height: 40px; }
.r-1 { height: 104px; }
.r-2 { height: 125px; }
.r-3 { height: 279px; }
.r-cont { height: 67px; }
.r-4 { height: 385px; }

.tutor th {
    font-weight: bold;
    text-align: center;
    vertical-align: middle !important;
    padding-bottom: 7px !important;
}

.tutor th.loose {
    vertical-align: top !important;
    padding-bottom: 0 !important;
}

.loose div {
    height: 21px;
}

.up div:first-child {
    margin-top: -1px;
}

.no {
    padding-left: 6px !important;
}

.ur {
    padding: 0 4px 0 5px !important;
}

.pad-13 { padding-top: 13px !important; }
.pad-2 { padding-top: 1px !important; }
.nest { padding-top: 16px !important; padding-right: 5px !important; }
.nest-top { padding-right: 5px !important; }
.nest-4 { padding-right: 4px !important; }

.sk {
    padding-left: 5px !important;
}

.sk.bottom {
    vertical-align: bottom !important;
    padding-bottom: 7px !important;
}

.pt-21 { padding-top: 21px !important; }
.pt-41 { padding-top: 41px !important; }
.pt-83 { padding-top: 83px !important; }

.su {
    padding: 0 4px 0 5px !important;
}

.cal {
    font-family: Lato, sans-serif;
    font-size: 11.2px;
    line-height: 14.7px;
    color: #222;
}

.tight {
    letter-spacing: -.12px;
}

.ser {
    font-family: "Liberation Serif", serif;
    font-size: 12px;
    line-height: 14px;
}

.j {
    text-align: justify;
    text-align-last: justify;
}

.first {
    text-indent: 21px;
}

.wide {
    margin-right: -1px;
}

/* table inside a table cell */
.split {
    display: flex;
    border: 1px solid #000;
    border-bottom: 0;
}

.s-q3 { height: 263px; }
.s-cont { height: 66px; border-top-width: 2px; border-bottom: 2px solid #000; }
.s-q4 { height: 356px; }

.stub {
    flex: 0 0 5px;
}

.left {
    flex: 0 0 112px;
}

.desc {
    flex: 1;
    min-width: 0;
    border-left: 1px solid #000;
    padding: 1px 5px 0 6px;
}

.nums {
    border-collapse: collapse;
    table-layout: fixed;
    font-family: Lato, sans-serif;
    font-size: 11.5px;
    line-height: 1;
    color: #222;
}

.nums td {
    border: 1px solid #000;
    padding: 0 3px 0 0;
    text-align: right;
    vertical-align: middle;
}

.nums td:first-child {
    width: 23px;
}

.n-q3 { width: 56px; height: 262px; }
.n-cont { width: 56px; height: 62px; }
.n-q3 td:last-child, .n-cont td:last-child { width: 33px; }

.n-q3 tr:first-child td, .n-cont tr:first-child td { border-top: 0; }
.n-cont tr:last-child td { border-bottom: 0; }

.n-q4 { width: 93px; height: 355px; }
.n-q4 td:nth-child(2), .n-q4 td:nth-child(3) {
    width: 35px;
    padding: 0;
    text-align: center;
    font-family: "Liberation Serif", serif;
    font-size: 7px;
    color: #555;
}
.n-q4 tr:last-child td { border-bottom: 0; }
.n-q4 td:first-child { font-size: 12.5px; padding-right: 4px; }

.li {
    display: flex;
    margin-left: -1px;
}

.m {
    flex: 0 0 18px;
}

.grow {
    flex: 1;
}

.in {
    padding-left: 17px;
}

.foot {
    display: flex;
    padding-left: 1px;
    padding-top: 1px;
}

.star {
    width: 36px;
}

/* status bar */
.status {
    flex: none;
    display: flex;
    align-items: center;
    height: 26px;
    background: #2b579a;
    color: #fff;
    font-size: 12.5px;
    position: relative;
}

.st {
    white-space: nowrap;
}

.st-page { margin-left: 15px; }
.st-words { margin-left: 25px; }
.st-book { margin-left: 24px; }
.st-lang { margin-left: 21px; }
.st-acc { margin-left: 24px; margin-right: 3px; }
.st-acc-t { font-size: 12.3px; }

.views {
    display: flex;
    align-items: stretch;
    height: 26px;
    margin-left: auto;
}

.view {
    width: 50px;
    display: flex;
    align-items: center;
    justify-content: center;
}

.view.active {
    background: #002050;
}

.zoom {
    display: flex;
    align-items: center;
    gap: 6px;
    margin-left: 8px;
}

.slider {
    position: relative;
    width: 125px;
    height: 1px;
    background: #fff;
}

.thumb {
    position: absolute;
    left: 32px;
    top: -7px;
    width: 6px;
    height: 14px;
    background: #fff;
}

.mid {
    position: absolute;
    left: 62px;
    top: -3px;
    width: 1px;
    height: 7px;
    background: #fff;
}

.st-zoom {
    margin-left: 16px;
    margin-right: 18px;
    font-size: 11.5px;
    color: #dfe6f2;
}

/* taskbar */
.taskbar {
    flex: none;
    display: flex;
    align-items: center;
    height: 60px;
    background: #050303;
    color: #fff;
}

.apps {
    display: flex;
    margin-left: 520px;
}

.app-i {
    position: relative;
    display: flex;
    align-items: center;
    justify-content: center;
    width: 55.07px;
    height: 50px;
}

.zoomapp::before {
    content: "";
    position: absolute;
    left: 12.500px;
    top: 10px;
    width: 30px;
    height: 30px;
    border-radius: 50%;
    background: #0b5cff;
}

.zoomapp {
    font-size: 8px;
    font-family: "Open Sans", sans-serif;
    color: #fff;
}

.canva::before {
    content: "";
    position: absolute;
    left: 12.500px;
    top: 10px;
    width: 30px;
    height: 30px;
    border-radius: 50%;
    background: linear-gradient(135deg, #19c4c4, #3d6fe0 50%, #7a2ee8);
}

.canva {
    font-family: "Liberation Serif", serif;
    font-style: italic;
    font-size: 9px;
    color: #fff;
}

.zoomapp, .canva {
    isolation: isolate;
}

.zoomapp::before, .canva::before {
    z-index: -1;
}

.badge {
    position: absolute;
    right: 8px;
    top: 2px;
}

.dot {
    position: absolute;
    left: 25px;
    top: 45px;
    width: 6px;
    height: 5px;
    border-radius: 3px;
    background: #8a8a8a;
}

.word-i {
    background: #1c1c1c;
    border-radius: 5px;
    width: 49px;
    margin-left: 3px;
}

.run {
    position: absolute;
    left: 15px;
    top: 45px;
    width: 20px;
    height: 4px;
    border-radius: 2px;
    background: #dca6e6;
}

.tray {
    margin-left: auto;
    display: flex;
    align-items: center;
    height: 60px;
}

.t-chev { margin-right: 21.5px; }
.t-cloud { margin-right: 20.5px; }
.t-sync { margin-right: 24px; }
.t-lang { font-size: 14px; margin-right: 23.5px; }
.t-wifi { margin-right: 11.5px; }
.t-vol { margin-right: 8px; }
.t-batt { margin-right: 22px; }

.t-clock {
    font-size: 14.6px;
    line-height: 20px;
    text-align: right;
    color: #eee;
    margin-right: 11px;
}

.t-bell {
    margin-right: 26px;
}
```
